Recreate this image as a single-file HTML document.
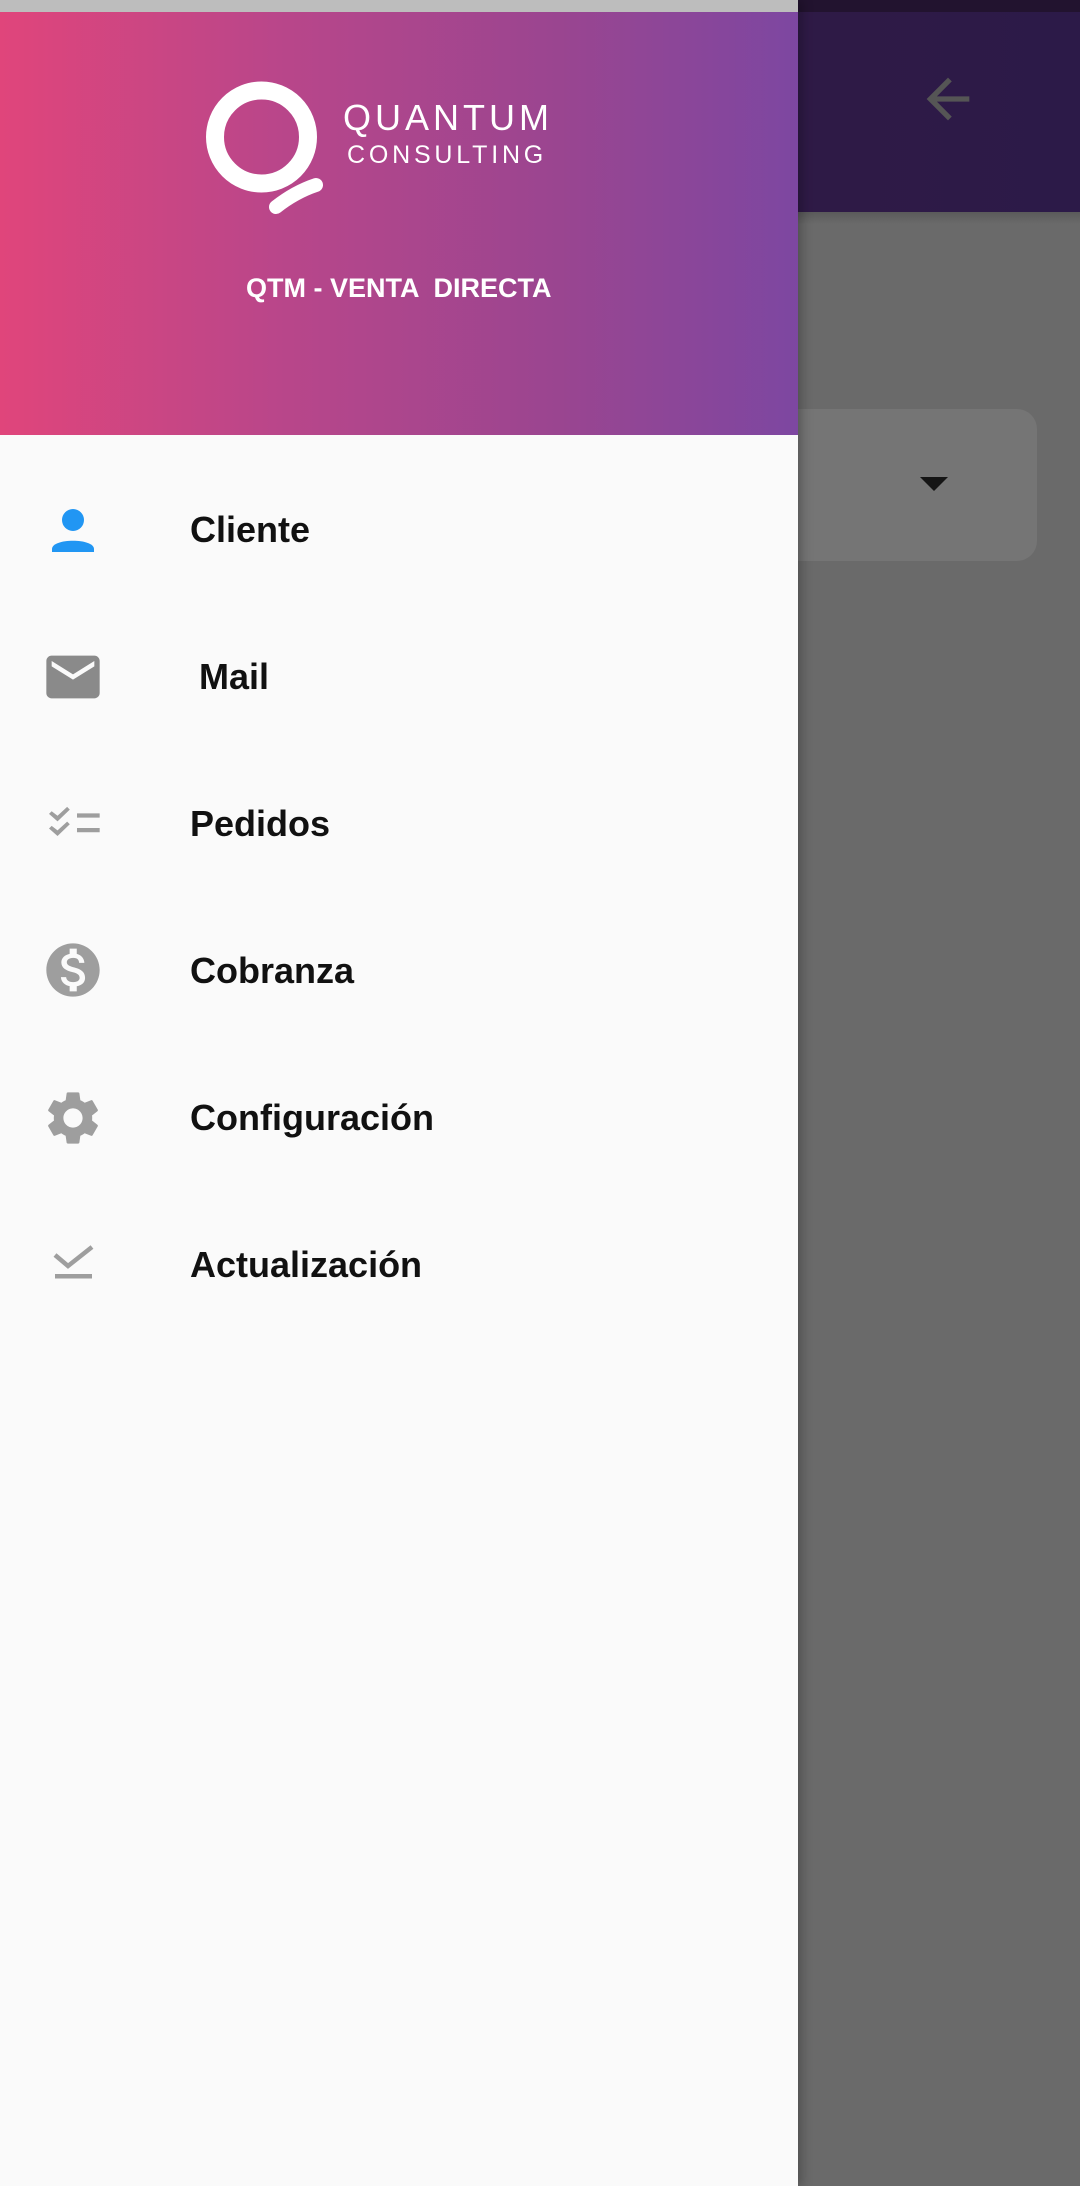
<!DOCTYPE html>
<html><head><meta charset="utf-8">
<style>
*{margin:0;padding:0;box-sizing:border-box}
html,body{width:1080px;height:2186px;overflow:hidden;background:#6a6a6a;font-family:"Liberation Sans",sans-serif}
.abs{position:absolute}
</style></head><body>
<div class="abs" style="left:0;top:0;width:1080px;height:12px;background:#22132f"></div>
<div class="abs" style="left:0;top:12px;width:1080px;height:200px;background:linear-gradient(90deg,#361a40,#2c1a48)"></div>
<div class="abs" style="left:0;top:212px;width:1080px;height:12px;background:linear-gradient(#5a5a5a,#6a6a6a)"></div>
<svg class="abs" style="left:916px;top:67px" width="64" height="64" viewBox="0 0 24 24"><path fill="#555" d="M20 11H7.83l5.59-5.59L12 4l-8 8 8 8 1.41-1.41L7.83 13H20v-2z"/></svg>
<div class="abs" style="left:700px;top:409px;width:337px;height:152px;background:#757575;border-radius:20px"></div>
<svg class="abs" style="left:920px;top:477px" width="28" height="16"><path d="M0 0H28L14 14Z" fill="#151515"/></svg>

<div class="abs" style="left:0;top:0;width:798px;height:2186px;background:#fafafa;box-shadow:4px 0 10px rgba(0,0,0,.25)"></div>
<div class="abs" style="left:0;top:0;width:798px;height:12px;background:#bdbdbd"></div>
<div class="abs" style="left:0;top:12px;width:798px;height:423px;background:linear-gradient(90deg,#e0457b,#b9468a 35%,#9a4590 70%,#7d47a1)"></div>
<svg class="abs" style="left:190px;top:70px" width="150" height="160">
<circle cx="71.5" cy="67" r="46.5" fill="none" stroke="#fff" stroke-width="18"/>
<path d="M86 137 Q105 122 126 115" fill="none" stroke="#fff" stroke-width="14" stroke-linecap="round"/>
</svg>
<div class="abs" style="left:343px;top:100px;font-size:36px;line-height:36px;color:#fff;letter-spacing:4px;font-weight:normal">QUANTUM</div>
<div class="abs" style="left:347px;top:143px;font-size:25px;line-height:25px;color:#fff;letter-spacing:3.8px">CONSULTING</div>
<div class="abs" style="left:246px;top:274px;font-size:27px;line-height:28px;color:#fff;font-weight:bold;white-space:pre">QTM - VENTA  DIRECTA</div>

<svg class="abs" style="left:41px;top:498px" width="64" height="64" viewBox="0 0 64 64">
<circle cx="32" cy="22" r="11" fill="#2196f3"/>
<path d="M11 54 V51 C11 40 53 40 53 51 V54 Z" fill="#2196f3"/>
</svg>
<svg class="abs" style="left:41px;top:645px" width="64" height="64" viewBox="0 0 24 24"><path fill="#8a8a8a" d="M20 4H4c-1.1 0-1.99.9-1.99 2L2 18c0 1.1.9 2 2 2h16c1.1 0 2-.9 2-2V6c0-1.1-.9-2-2-2zm0 4l-8 5-8-5V6l8 5 8-5v2z"/></svg>
<svg class="abs" style="left:41px;top:792px" width="64" height="64" viewBox="0 0 24 24"><path fill="#9e9e9e" d="M22 8h-8.5v1.6H22V8zm0 5.5h-8.5v1.6H22v-1.6zM6.2 11L3 8.2l1-1 2.2 1.7 3.6-3.3 1 1L6.2 11zm0 5.5L3 13.7l1-1 2.2 1.7 3.6-3.3 1 1L6.2 16.5z"/></svg>
<svg class="abs" style="left:41px;top:938px" width="64" height="64" viewBox="0 0 24 24"><path fill="#9e9e9e" d="M12 2C6.48 2 2 6.48 2 12s4.48 10 10 10 10-4.48 10-10S17.52 2 12 2zm1.41 16.09V20h-2.67v-1.93c-1.71-.36-3.16-1.460-3.270-3.4h1.960c.1 1.05.82 1.87 2.65 1.87 1.96 0 2.4-.98 2.4-1.59 0-.83-.44-1.610-2.670-2.14-2.48-.6-4.18-1.62-4.18-3.67 0-1.72 1.39-2.84 3.11-3.21V4h2.67v1.95c1.86.45 2.79 1.86 2.85 3.39H14.3c-.05-1.11-.64-1.870-2.220-1.870-1.5 0-2.4.68-2.4 1.64 0 .84.65 1.39 2.67 1.91s4.18 1.39 4.18 3.91c-.01 1.83-1.38 2.83-3.12 3.16z"/></svg>
<svg class="abs" style="left:41px;top:1086px" width="64" height="64" viewBox="0 0 24 24"><path fill="#9e9e9e" d="M19.14 12.94c.04-.3.06-.61.06-.94 0-.32-.02-.64-.07-.94l2.03-1.58c.18-.14.23-.41.12-.61l-1.92-3.32c-.12-.22-.37-.29-.59-.22l-2.39.96c-.5-.38-1.030-.7-1.62-.94l-.36-2.54c-.04-.24-.24-.41-.48-.41h-3.84c-.24 0-.43.17-.47.41l-.36 2.54c-.59.24-1.13.57-1.62.94l-2.39-.96c-.22-.08-.47 0-.59.22L2.74 8.87c-.12.21-.08.47.12.61l2.03 1.58c-.05.3-.09.63-.09.94s.02.64.07.94l-2.03 1.58c-.18.14-.23.41-.12.61l1.92 3.32c.12.22.37.29.59.22l2.39-.96c.5.38 1.03.7 1.62.94l.36 2.54c.05.24.24.41.48.41h3.84c.24 0 .44-.17.47-.41l.36-2.54c.59-.24 1.13-.56 1.62-.94l2.39.96c.22.08.47 0 .59-.22l1.92-3.32c.12-.22.07-.47-.12-.61l-2.010-1.58zM12 15.6c-1.98 0-3.6-1.62-3.6-3.6s1.62-3.6 3.6-3.6 3.6 1.62 3.6 3.6-1.62 3.6-3.6 3.6z"/></svg>
<svg class="abs" style="left:41px;top:1235px" width="64" height="64" viewBox="0 0 64 64">
<path d="M14 20 L27 31 L51 12" fill="none" stroke="#9e9e9e" stroke-width="4.5"/>
<rect x="14" y="39" width="37" height="4.5" fill="#9e9e9e"/>
</svg>

<div class="abs" style="left:190px;top:512px;font-size:36px;line-height:36px;font-weight:bold;color:#111">Cliente</div>
<div class="abs" style="left:199px;top:659px;font-size:36px;line-height:36px;font-weight:bold;color:#111">Mail</div>
<div class="abs" style="left:190px;top:806px;font-size:36px;line-height:36px;font-weight:bold;color:#111">Pedidos</div>
<div class="abs" style="left:190px;top:953px;font-size:36px;line-height:36px;font-weight:bold;color:#111">Cobranza</div>
<div class="abs" style="left:190px;top:1100px;font-size:36px;line-height:36px;font-weight:bold;color:#111">Configuración</div>
<div class="abs" style="left:190px;top:1247px;font-size:36px;line-height:36px;font-weight:bold;color:#111">Actualización</div>
</body></html>
